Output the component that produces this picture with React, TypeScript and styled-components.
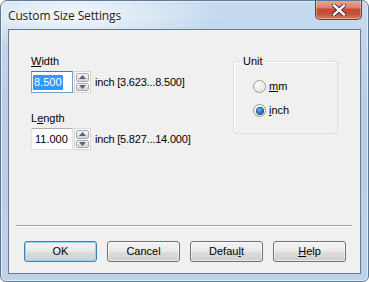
import React from 'react';
import styled, { createGlobalStyle } from 'styled-components';

const Global = createGlobalStyle`
  html, body { margin: 0; padding: 0; background: #ffffff; }
  body { font-family: "Liberation Sans", Arial, sans-serif; font-size: 11px; color: #000; }
  * { box-sizing: border-box; }
`;

const Window = styled.div`
  width: 369px;
  height: 282px;
  border: 1px solid #5f7895;
  border-radius: 7px 7px 6px 6px;
  background:
    radial-gradient(ellipse 150px 34px at 70px 14px, rgba(255,255,255,0.8), rgba(255,255,255,0) 100%),
    linear-gradient(180deg, #c6dbf0 0%, #b8cfe9 40%, #bdd3ec 100%);
  display: flex;
  flex-direction: column;
  padding: 0 7px 7px 7px;
  overflow: hidden;
  box-shadow: inset 0 0 0 1px rgba(255,255,255,0.55);
`;

const TitleBar = styled.div`
  height: 28px;
  display: flex;
  justify-content: space-between;
  align-items: flex-start;
`;

const Title = styled.div`
  font-family: "Open Sans", "Noto Sans", sans-serif;
  font-size: 12px;
  line-height: 16px;
  margin-top: 7px;
  color: #1a1a1a;
  letter-spacing: -0.15px;
  text-shadow: 0 0 6px #ffffff, 0 0 3px #ffffff;
`;

const CloseButton = styled.div`
  width: 47px;
  height: 20px;
  margin-top: -1px;
  margin-right: -1px;
  border: 1px solid #6f3a32;
  border-top: none;
  border-radius: 0 0 5px 5px;
  background: linear-gradient(180deg, #e9a99b 0%, #d98170 40%, #c44a35 50%, #c9523c 75%, #dc7e5f 100%);
  box-shadow: inset 0 0 0 1px rgba(255,255,255,0.35);
  display: flex;
  align-items: center;
  justify-content: center;
`;

const Client = styled.div`
  flex: 1;
  background: #f0f0f0;
  border: 1px solid #6c7988;
  display: flex;
  flex-direction: column;
  padding: 25px 0 11px 0;
`;

const TopSection = styled.div`
  display: grid;
  grid-template-columns: 202px 105px;
  padding-left: 22px;
  align-items: start;
`;

const FieldColumn = styled.div`
  display: flex;
  flex-direction: column;
`;

const FieldLabel = styled.div<{ $gap?: number }>`
  line-height: 13px;
  height: 13px;
  margin-top: ${p => p.$gap ?? 0}px;
  margin-bottom: 3px;
`;

const Acc = styled.span`
  text-decoration: underline;
  text-underline-offset: 1px;
`;

const InputRow = styled.div`
  display: flex;
  align-items: center;
  height: 22px;
`;

const TextBox = styled.div<{ $focused?: boolean }>`
  width: 42px;
  height: 22px;
  background: #ffffff;
  border: 1px solid ${p => (p.$focused ? '#6fa3d6' : '#e2e3ea')};
  border-top-color: ${p => (p.$focused ? '#3d7bbd' : '#abadb3')};
  padding: 0 0 0 1px;
  display: flex;
  align-items: center;
  line-height: 13px;
`;

const Selected = styled.span`
  background: #3399ff;
  color: #ffffff;
  padding: 1px 1px 1px 1px;
`;

const Plain = styled.span`
  padding-left: 2px;
`;

const Spinner = styled.div`
  width: 17px;
  height: 22px;
  margin-left: 1px;
  border: 1px solid #d6d6d6;
  background: #ffffff;
  display: flex;
  flex-direction: column;
  gap: 1px;
  padding: 1px;
`;

const SpinButton = styled.div`
  flex: 1;
  border: 1px solid #a9a9a9;
  border-radius: 2px;
  background: linear-gradient(180deg, #f4f4f4 0%, #e8e8e8 50%, #dcdcdc 51%, #d6d6d6 100%);
  display: flex;
  align-items: center;
  justify-content: center;
`;

const RangeText = styled.span`
  margin-left: 4px;
  white-space: nowrap;
  letter-spacing: -0.2px;
`;

const GroupBox = styled.div`
  position: relative;
  margin-top: 6px;
  width: 105px;
  height: 73px;
  border: 1px solid #d5dfe5;
  border-radius: 3px;
  box-shadow: inset 1px 1px 0 #ffffff;
  padding: 18px 0 0 19px;
  display: flex;
  flex-direction: column;
  gap: 11px;
`;

const GroupCaption = styled.span`
  position: absolute;
  top: -7px;
  left: 7px;
  padding: 0 2px;
  line-height: 13px;
  background: #f0f0f0;
`;

const RadioRow = styled.div`
  display: flex;
  align-items: center;
  height: 13px;
  line-height: 13px;
  gap: 3px;
`;

const RadioCircle = styled.div<{ $checked?: boolean }>`
  width: 13px;
  height: 13px;
  border-radius: 50%;
  border: 1px solid #9a9a9a;
  background: radial-gradient(circle at 40% 35%, #ffffff 0%, #ececec 45%, #cfcfcf 100%);
  box-shadow: inset 0 0 0 1px rgba(255,255,255,0.7);
  display: flex;
  align-items: center;
  justify-content: center;
  &::after {
    content: '';
    display: ${p => (p.$checked ? 'block' : 'none')};
    width: 6px;
    height: 6px;
    border-radius: 50%;
    background: radial-gradient(circle at 40% 35%, #5cc3f5 0%, #1b7dc8 50%, #0a3f80 100%);
    box-shadow: 0 0 0 1px #28507a;
  }
`;

const Separator = styled.div`
  margin: auto 8px 0 7px;
  height: 2px;
  border-top: 1px solid #a0a0a0;
  border-bottom: 1px solid #ffffff;
`;

const ButtonRow = styled.div`
  display: flex;
  gap: 10px;
  padding-left: 15px;
  margin-top: 14px;
`;

const PushButton = styled.div<{ $default?: boolean }>`
  width: 73px;
  height: 21px;
  border: 1px solid ${p => (p.$default ? '#3c7fb1' : '#707070')};
  border-radius: 3px;
  background: linear-gradient(180deg, #f2f2f2 0%, #ebebeb 48%, #dddddd 52%, #cfcfcf 100%);
  box-shadow: inset 0 0 0 1px ${p => (p.$default ? '#8fd8f8' : 'rgba(255,255,255,0.6)')};
  display: flex;
  align-items: center;
  justify-content: center;
  line-height: 13px;
`;

const Arrow = ({ up }: { up?: boolean }) => (
  <svg width="7" height="4" viewBox="0 0 7 4">
    <path d={up ? 'M0 4 L3.5 0 L7 4 Z' : 'M0 0 L7 0 L3.5 4 Z'} fill="#4f6183" />
  </svg>
);

const CloseGlyph = () => (
  <svg width="14" height="12" viewBox="0 0 14 12">
    <path
      d="M2 1.5 L12 10.5 M12 1.5 L2 10.5"
      stroke="#3b2a28"
      strokeWidth="4.2"
      strokeLinecap="square"
    />
    <path
      d="M2 1.5 L12 10.5 M12 1.5 L2 10.5"
      stroke="#ffffff"
      strokeWidth="2.4"
      strokeLinecap="square"
    />
  </svg>
);

const SpinBox = () => (
  <Spinner>
    <SpinButton>
      <Arrow up />
    </SpinButton>
    <SpinButton>
      <Arrow />
    </SpinButton>
  </Spinner>
);

export default function App() {
  return (
    <>
      <Global />
      <Window>
        <TitleBar>
          <Title>Custom Size Settings</Title>
          <CloseButton>
            <CloseGlyph />
          </CloseButton>
        </TitleBar>
        <Client>
          <TopSection>
            <FieldColumn>
              <FieldLabel>
                <Acc>W</Acc>idth
              </FieldLabel>
              <InputRow>
                <TextBox $focused>
                  <Selected>8.500</Selected>
                </TextBox>
                <SpinBox />
                <RangeText>inch [3.623...8.500]</RangeText>
              </InputRow>
              <FieldLabel $gap={19}>
                L<Acc>e</Acc>ngth
              </FieldLabel>
              <InputRow>
                <TextBox>
                  <Plain>11.000</Plain>
                </TextBox>
                <SpinBox />
                <RangeText>inch [5.827...14.000]</RangeText>
              </InputRow>
            </FieldColumn>
            <GroupBox>
              <GroupCaption>Unit</GroupCaption>
              <RadioRow>
                <RadioCircle />
                <span>
                  <Acc>m</Acc>m
                </span>
              </RadioRow>
              <RadioRow>
                <RadioCircle $checked />
                <span>
                  <Acc>i</Acc>nch
                </span>
              </RadioRow>
            </GroupBox>
          </TopSection>
          <Separator />
          <ButtonRow>
            <PushButton $default>OK</PushButton>
            <PushButton>Cancel</PushButton>
            <PushButton>
              Defau<Acc>l</Acc>t
            </PushButton>
            <PushButton>
              <Acc>H</Acc>elp
            </PushButton>
          </ButtonRow>
        </Client>
      </Window>
    </>
  );
}
